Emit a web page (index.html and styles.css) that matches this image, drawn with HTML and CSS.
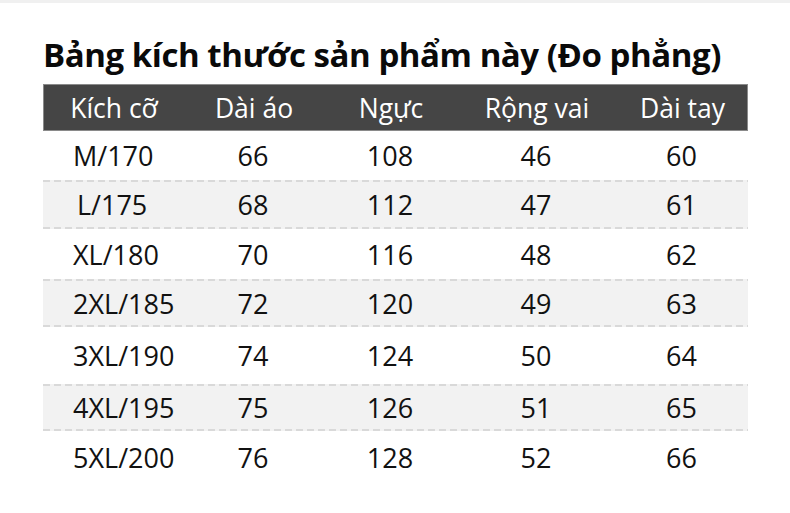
FILE: index.html
```html
<!DOCTYPE html>
<html lang="vi">
<head>
<meta charset="utf-8">
<link rel="stylesheet" href="styles.css">
</head>
<body>
<div class="page">
  <h1 class="title">Bảng kích thước sản phẩm này (Đo phẳng)</h1>
  <div class="table">
    <div class="row head">
      <div>Kích cỡ</div><div>Dài áo</div><div>Ngực</div><div>Rộng vai</div><div>Dài tay</div>
    </div>
    <div class="row r1"><div class="size">M/170</div><div>66</div><div>108</div><div>46</div><div>60</div></div>
    <div class="row r2 alt"><div class="size size-l">L/175</div><div>68</div><div>112</div><div>47</div><div>61</div></div>
    <div class="row r3"><div class="size">XL/180</div><div>70</div><div>116</div><div>48</div><div>62</div></div>
    <div class="row r4 alt"><div class="size">2XL/185</div><div>72</div><div>120</div><div>49</div><div>63</div></div>
    <div class="row r5"><div class="size">3XL/190</div><div>74</div><div>124</div><div>50</div><div>64</div></div>
    <div class="row r6 alt"><div class="size">4XL/195</div><div>75</div><div>126</div><div>51</div><div>65</div></div>
    <div class="row r7"><div class="size">5XL/200</div><div>76</div><div>128</div><div>52</div><div>66</div></div>
  </div>
</div>
</body>
</html>
```

FILE: styles.css
```css
html, body {
  margin: 0;
  padding: 0;
  background: #ffffff;
}
body {
  width: 790px;
  height: 513px;
  overflow: hidden;
  font-family: "Open Sans", "Noto Sans", sans-serif;
  color: #111;
  border-top: 3px solid #f0f0f0;
  box-sizing: border-box;
}
.page {
  padding: 0 0 0 43px;
}
.title {
  margin: 32px 0 0 0;
  font-size: 33px;
  line-height: 40px;
  font-weight: 700;
  color: #0a0a0a;
  letter-spacing: -0.45px;
  white-space: nowrap;
}
.table {
  width: 705px;
  margin-top: 9px;
}
.row {
  display: grid;
  grid-template-columns: 140px 140px 134px 158px 133px;
  align-items: center;
  font-size: 27px;
  text-align: center;
  box-sizing: border-box;
  color: #111;
}
.head {
  height: 47px;
  background: #454545;
  border: 1px solid #8a8a8a;
  color: #ffffff;
  font-size: 26.5px;
  font-weight: 400;
}
.size {
  text-align: left;
  padding-left: 30px;
}
.size-l {
  padding-left: 34px;
}
.alt {
  background:
    repeating-linear-gradient(90deg, #d9d9d9 0 7px, transparent 7px 11px) top / 100% 2px no-repeat,
    repeating-linear-gradient(90deg, #d9d9d9 0 7px, transparent 7px 11px) bottom / 100% 2px no-repeat,
    #f2f2f2;
}
.r1 { height: 49px; }
.r2 { height: 49px; }
.r3 { height: 50px; }
.r4 { height: 48px; }
.r5 { height: 57px; }
.r6 { height: 47px; }
.r7 { height: 52px; }
```
